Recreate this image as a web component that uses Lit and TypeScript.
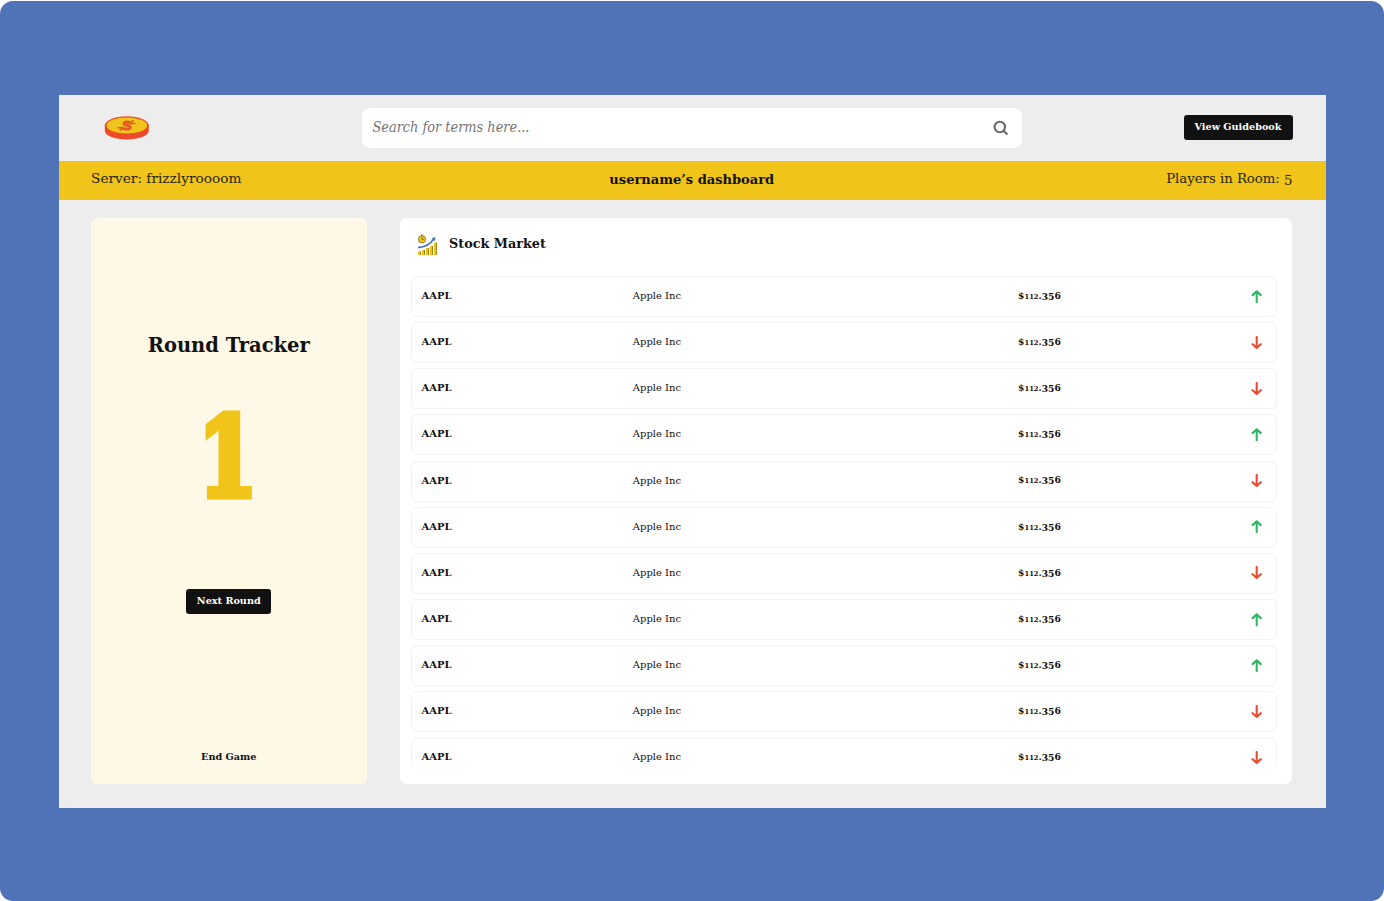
import { LitElement, html, css, svg } from 'lit';
import { customElement, property } from 'lit/decorators.js';

type Trend = 'up' | 'down';
const trends: Trend[] = ['up', 'down', 'down', 'up', 'down', 'up', 'down', 'up', 'up', 'down', 'down'];

@customElement('stock-row')
class StockRow extends LitElement {
  @property() trend: Trend = 'up';

  static styles = css`
    :host { display: block; flex: none; }
    .row {
      box-sizing: border-box;
      height: 41px;
      display: grid;
      grid-template-columns: 211.3px 385.3px 1fr 11px;
      align-items: center;
      padding: 0 14px 0 10px;
      border: 1px solid #f2f2f2;
      border-radius: 6px;
      color: #111;
      line-height: 14px;
    }
    .symbol { font-size: 9.95px; font-weight: 700; margin-top: -1.2px; }
    .name { font-size: 10px; margin-top: -1.2px; }
    .price { font-size: 9.15px; font-weight: 700; margin-top: -1.4px; white-space: nowrap; }
    .low { font-size: 0.74em; line-height: 1; }
    .drop { position: relative; top: 1px; }
    .arrow { display: block; width: 12px; height: 14px; fill: none; stroke-width: 2.1; stroke-linecap: round; stroke-linejoin: round; }
    .up { stroke: #2fb765; }
    .down { stroke: #ec4a30; }
  `;

  render() {
    const shape = this.trend === 'up'
      ? svg`<path d="M5.700 12.200V1.400M1.600 5.100 5.700 1.400l4.100 3.700"/>`
      : svg`<path d="M5.700 1v10.900M1.600 8.200 5.700 11.900l4.100-3.700"/>`;
    return html`<div class="row">
      <span class="symbol">AAPL</span>
      <span class="name">Apple Inc</span>
      <span class="price">$<span class="low">112</span>.<span class="drop">35</span>6</span>
      <svg class="arrow ${this.trend}" viewBox="0 0 12 14">${shape}</svg>
    </div>`;
  }
}

@customElement('app-root')
class AppRoot extends LitElement {
  static styles = css`
    :host {
      display: block;
      box-sizing: border-box;
      height: 901px;
      padding-top: 1px;
      background: #fff;
      color: #111;
      font-family: 'DejaVu Serif', 'Liberation Serif', serif;
      overflow: hidden;
    }
    .canvas {
      box-sizing: border-box;
      height: 900px;
      padding: 94px 58.5px 0;
      border-radius: 13px;
      background: #5072b7;
    }
    .app { height: 712.5px; background: #ededed; display: flex; flex-direction: column; }
    .header {
      height: 66px;
      box-sizing: border-box;
      display: grid;
      grid-template-columns: 303.5px 660px 1fr;
      align-items: center;
      padding-right: 33px;
    }
    .logo { display: block; width: 46px; height: 26px; margin-left: 45px; }
    .search {
      height: 40px;
      box-sizing: border-box;
      display: flex;
      align-items: center;
      justify-content: space-between;
      padding: 0 13px 0 10.5px;
      background: #fff;
      border-radius: 8px;
    }
    .placeholder { font-size: 14.36px; font-stretch: condensed; font-style: italic; color: #757575; line-height: 20px; margin-top: -2px; }
    .glass { width: 16px; height: 16px; fill: none; stroke: #676767; stroke-width: 2.1; }
    .button {
      display: block;
      box-sizing: border-box;
      height: 25px;
      border: 0;
      border-radius: 3px;
      background: #111;
      color: #fff;
      font: 700 9.67px/23px 'DejaVu Serif', serif;
      padding: 0 0 2px;
      white-space: nowrap;
    }
    .guide { width: 109px; justify-self: end; margin-top: -1px; }
    .bar {
      height: 39px;
      display: grid;
      grid-template-columns: 1fr auto 1fr;
      padding: 0 33px 0 32.5px;
      background: #f0c419;
      line-height: 36.5px;
      color: #292511;
    }
    .server { font-size: 13.7px; line-height: 35px; }
    .title { font-weight: 700; font-size: 13.03px; line-height: 37px; color: #111; }
    .players { text-align: right; font-size: 13.25px; }
    .count { position: relative; top: 2px; }
    .content {
      flex: 1;
      display: grid;
      grid-template-columns: 275.5px 892px;
      column-gap: 33.5px;
      padding: 18px 0 23.5px 32.5px;
      min-height: 0;
    }
    .tracker {
      background: #fef8e6;
      border-radius: 6px;
      display: flex;
      flex-direction: column;
      align-items: center;
    }
    .heading { margin: 113px 0 0; font-size: 19.5px; line-height: 30px; font-weight: 700; }
    .round {
      margin-top: 35.5px;
      height: 120px;
      font-size: 111px;
      line-height: 120px;
      font-weight: 700;
      font-stretch: condensed;
      color: #f0c419;
      -webkit-text-stroke: 7px #f0c419;
      transform: translateX(-1px) scaleX(0.85);
    }
    .next { width: 85px; margin-top: 72.500px; }
    .end { margin-top: 133px; font-size: 9.68px; line-height: 20px; font-weight: 700; }
    .market {
      background: #fff;
      border-radius: 7px;
      padding: 16px 15.5px 18px 10.5px;
      display: flex;
      flex-direction: column;
      min-height: 0;
    }
    .market-head { display: flex; height: 42px; padding-left: 6px; flex: none; }
    .chart { width: 21px; height: 22px; margin-right: 11.5px; }
    .market-title { margin: 0; font-size: 12.81px; line-height: 20px; font-weight: 700; }
    .list { flex: 1; min-height: 0; overflow: hidden; display: flex; flex-direction: column; gap: 5.17px; }
  `;

  render() {
    return html`<div class="canvas"><main class="app">
      <header class="header">
        <svg class="logo" viewBox="0 0 46 26">
          <path fill="#ed4a2b" d="M.800 10v5.500C.800 21 11 24.500 22.800 24.500S44.800 21 44.800 15.500V10z"/>
          <ellipse cx="22.800" cy="10.500" rx="22" ry="9.300" fill="#ed4a2b"/>
          <ellipse cx="22.800" cy="10.500" rx="20.300" ry="8" fill="#f0c419"/>
          <path fill="none" stroke="#e5582a" stroke-width="2.800" stroke-linecap="round" d="M26.500 8c-3-1.700-7.500-1-6.500 1 .8 1.500 6 1.400 6.500 3.200.5 2-5 2.800-7.500 1"/>
          <path fill="none" stroke="#e5582a" stroke-width="1.500" stroke-linecap="round" d="m26.500 8 2.500-2.400M19 13.200l-2.800 2M27.500 8.500l3.500.1M17.500 12.600l-3.300.1"/>
        </svg>
        <div class="search">
          <span class="placeholder">Search for terms here...</span>
          <svg class="glass" viewBox="0 0 16 16"><circle cx="6.800" cy="7" r="5.200"/><path d="m10.600 10.800 3.800 3.600"/></svg>
        </div>
        <button class="button guide">View Guidebook</button>
      </header>
      <div class="bar">
        <span class="server">Server: frizzlyroooom</span>
        <span class="title">username’s dashboard</span>
        <span class="players">Players in Room: <span class="count">5</span></span>
      </div>
      <div class="content">
        <aside class="tracker">
          <h2 class="heading">Round Tracker</h2>
          <div class="round">1</div>
          <button class="button next">Next Round</button>
          <span class="end">End Game</span>
        </aside>
        <section class="market">
          <div class="market-head">
            <svg class="chart" viewBox="0 0 21 22">
              <g fill="#f0c419"><path d="M1 17.500h3V21H1zM5 16h3v5H5zM9 14h3v7H9zM13 12h3v9h-3zM17 8.500h3V21h-3z"/></g>
              <path fill="#8a762b" d="M3.200 17.500H4V21h-.8zM7.200 16H8v5h-.8zM11.200 14h.8v7h-.8zM15.200 12h.8v9h-.8zM19.200 8.500h.8V21h-.8z"/>
              <circle cx="5" cy="5.300" r="3.700" fill="#efc21c" stroke="#8a762b" stroke-width=".8"/>
              <path fill="none" stroke="#76621d" stroke-width=".8" d="M4 1h2M5 3v2.500h1.800"/>
              <path fill="none" stroke="#4e73bd" stroke-width="1.700" d="M1 13.300C8 13.500 13 10.500 17 4.800"/>
              <path fill="#4e73bd" d="m14.500 4.700 3.800-2-.2 4.300z"/>
            </svg>
            <h2 class="market-title">Stock Market</h2>
          </div>
          <div class="list">${trends.map(t => html`<stock-row .trend=${t}></stock-row>`)}</div>
        </section>
      </div>
    </main></div>`;
  }
}
